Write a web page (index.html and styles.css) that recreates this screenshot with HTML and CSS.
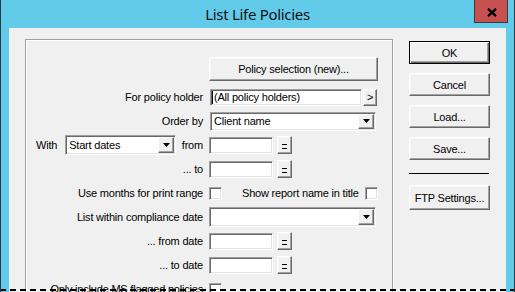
FILE: index.html
```html
<!DOCTYPE html>
<html>
<head>
<meta charset="utf-8">
<link rel="stylesheet" href="styles.css">
</head>
<body>
<div class="window">
  <div class="titlebar">
    <span></span>
    <div class="title">List Life Policies</div>
    <div class="tb-right">
      <div class="close"><svg width="10" height="9" viewBox="0 0 10 9"><path d="M1 0.8 L9 8.2 M9 0.8 L1 8.2" stroke="#000" stroke-width="2.3" fill="none"/></svg></div>
    </div>
  </div>
  <div class="client">
    <div class="group">
      <div class="form">
        <div class="lbl"></div>
        <div class="ctl top"><button class="btn policy">Policy selection (new)...</button></div>

        <div class="lbl">For policy holder</div>
        <div class="ctl"><div class="edit holder"><span class="caret"></span>(All policy holders)</div><button class="btn mini">&gt;</button></div>

        <div class="lbl">Order by</div>
        <div class="ctl"><div class="combo order"><span class="val">Client name</span><span class="drop"><svg width="7" height="4" viewBox="0 0 7 4"><path d="M0 0H7L3.5 4Z" fill="#000"/></svg></span></div></div>

        <div class="lbl with"><span>With</span><div class="combo start"><span class="val">Start dates</span><span class="drop"><svg width="7" height="4" viewBox="0 0 7 4"><path d="M0 0H7L3.5 4Z" fill="#000"/></svg></span></div><span class="from">from</span></div>
        <div class="ctl"><div class="edit date"></div><button class="btn eq"><span class="eqs"></span></button></div>

        <div class="lbl">... to</div>
        <div class="ctl"><div class="edit date"></div><button class="btn eq"><span class="eqs"></span></button></div>

        <div class="lbl">Use months for print range</div>
        <div class="ctl"><span class="chk"></span><span class="chk-text">Show report name in title</span><span class="chk second"></span></div>

        <div class="lbl">List within compliance date</div>
        <div class="ctl"><div class="combo comp"><span class="val"></span><span class="drop"><svg width="7" height="4" viewBox="0 0 7 4"><path d="M0 0H7L3.5 4Z" fill="#000"/></svg></span></div></div>

        <div class="lbl">... from date</div>
        <div class="ctl"><div class="edit date"></div><button class="btn eq"><span class="eqs"></span></button></div>

        <div class="lbl">... to date</div>
        <div class="ctl"><div class="edit date"></div><button class="btn eq"><span class="eqs"></span></button></div>

        <div class="lbl">Only include MS flagged policies</div>
        <div class="ctl"><span class="chk"></span></div>
      </div>
    </div>
    <div class="buttons">
      <button class="btn side default">OK</button>
      <button class="btn side">Cancel</button>
      <button class="btn side">Load...</button>
      <button class="btn side">Save...</button>
      <div class="sep"></div>
      <button class="btn side ftp">FTP Settings...</button>
    </div>
  </div>
  <div class="focus-dash"></div>
</div>
</body>
</html>
```

FILE: styles.css
```css
html, body {
  margin: 0;
  padding: 0;
  background: #fff;
}

.window {
  position: relative;
  width: 515px;
  height: 292px;
  box-sizing: border-box;
  border-left: 1px solid #2f3a40;
  border-right: 1px solid #2f3a40;
  background: #63cbea;
  display: flex;
  flex-direction: column;
  overflow: hidden;
  font-family: "Liberation Sans", Arial, sans-serif;
  font-size: 11px;
  letter-spacing: -0.2px;
  color: #000;
}

.titlebar {
  height: 28px;
  flex: none;
  display: grid;
  grid-template-columns: 1fr auto 1fr;
}

.title {
  font-family: "Noto Sans", "Open Sans", sans-serif;
  font-size: 15px;
  letter-spacing: -0.3px;
  color: #111;
  padding-top: 4px;
  line-height: 20px;
}

.tb-right {
  display: flex;
  justify-content: flex-end;
  align-items: flex-start;
}

.close {
  width: 34px;
  height: 23px;
  margin-right: 6px;
  box-sizing: border-box;
  background: #c75050;
  border: 1px solid #3a3a3a;
  border-top: none;
  display: flex;
  justify-content: center;
  align-items: flex-start;
  padding-top: 8px;
}
.close svg { display: block; margin-left: 1px; }

.client {
  flex: 1;
  margin: 0 8px;
  background: #f0f0f0;
  display: flex;
  align-items: flex-start;
  padding: 11px 16px 0 16px;
  min-height: 0;
}

.group {
  width: 368px;
  height: 320px;
  flex: none;
  box-sizing: border-box;
  border: 1px solid #a0a0a0;
  box-shadow: inset 1px 1px #fff, 1px 1px #fff;
}

.form {
  display: grid;
  grid-template-columns: 177px 1fr;
  column-gap: 6px;
  grid-template-rows: 28px;
  grid-auto-rows: 24px;
  align-items: center;
  padding-top: 17px;
}

.lbl {
  text-align: right;
  white-space: nowrap;
}

.lbl.with {
  display: flex;
  align-items: center;
  text-align: left;
  padding-left: 10px;
}
.lbl.with .from { margin-left: auto; }

.ctl {
  display: flex;
  align-items: center;
  height: 100%;
}
.ctl.top { align-items: flex-start; }

button {
  font: inherit;
  letter-spacing: inherit;
  color: #000;
  padding: 0;
  margin: 0;
  cursor: default;
}

.btn {
  box-sizing: border-box;
  background: #f0f0f0;
  border: 1px solid;
  border-color: #fff #696969 #696969 #fff;
  box-shadow: inset -1px -1px #a0a0a0, inset 1px 1px #f8f8f8;
  display: flex;
  align-items: center;
  justify-content: center;
  white-space: nowrap;
}

.btn.policy {
  width: 169px;
  height: 24px;
}

.btn.mini {
  width: 14px;
  height: 17px;
  margin-left: 1px;
}

.btn.eq {
  width: 15px;
  height: 18px;
  margin-left: 4px;
}

.eqs {
  display: block;
  width: 5px;
  height: 3px;
  border-top: 1px solid #000;
  border-bottom: 1px solid #000;
  margin-top: 2px;
}

.edit {
  box-sizing: border-box;
  height: 17px;
  background: #fff;
  border: 1px solid;
  border-color: #a0a0a0 #fff #fff #a0a0a0;
  box-shadow: inset 1px 1px #696969, inset -1px -1px #e3e3e3;
  display: flex;
  align-items: center;
  padding-left: 1px;
  white-space: nowrap;
}
.edit.holder { width: 152px; margin-left: 1px; }
.edit.date { width: 64px; }

.caret {
  display: inline-block;
  width: 1px;
  height: 13px;
  background: #000;
  margin-right: 1px;
}

.combo {
  box-sizing: border-box;
  height: 20px;
  background: #fff;
  border: 1px solid;
  border-color: #a0a0a0 #fff #fff #a0a0a0;
  box-shadow: inset 1px 1px #696969, inset -1px -1px #e3e3e3;
  padding: 1px;
  display: flex;
  align-items: stretch;
}
.combo.order { width: 166px; margin-left: 1px; height: 19px; }
.combo.start { width: 111px; margin-left: 8px; }
.combo.comp { width: 167px; }

.combo .val {
  flex: 1;
  display: flex;
  align-items: center;
  padding-left: 2px;
  white-space: nowrap;
}

.combo .drop {
  width: 16px;
  box-sizing: border-box;
  background: #f0f0f0;
  border: 1px solid;
  border-color: #fff #696969 #696969 #fff;
  box-shadow: inset -1px -1px #a0a0a0;
  display: flex;
  align-items: center;
  justify-content: center;
}
.combo .drop svg { display: block; }

.chk {
  width: 13px;
  height: 13px;
  flex: none;
  box-sizing: border-box;
  background: #fff;
  border: 1px solid;
  border-color: #a0a0a0 #fff #fff #a0a0a0;
  box-shadow: inset 1px 1px #696969, inset -1px -1px #e3e3e3;
}
.chk-text { margin-left: 20px; white-space: nowrap; }
.chk.second { margin-left: 6px; }

.buttons {
  width: 81px;
  flex: none;
  margin-left: 16px;
  padding-top: 2px;
  display: flex;
  flex-direction: column;
  gap: 9px;
}

.btn.side {
  width: 81px;
  height: 23px;
}

.btn.default {
  border: 1px solid #000;
  box-shadow: inset 1px 1px #fff, inset -1px -1px #696969, inset -2px -2px #a0a0a0;
}

.sep {
  height: 1px;
  background: #000;
  margin-top: 4px;
  margin-right: 1px;
}

.btn.ftp {
  height: 25px;
  margin-top: 2px;
}

.focus-dash {
  position: absolute;
  left: -1px;
  right: -1px;
  top: 289px;
  height: 2px;
  background: repeating-linear-gradient(to right, #000 0 6px, transparent 6px 10px);
}
```
